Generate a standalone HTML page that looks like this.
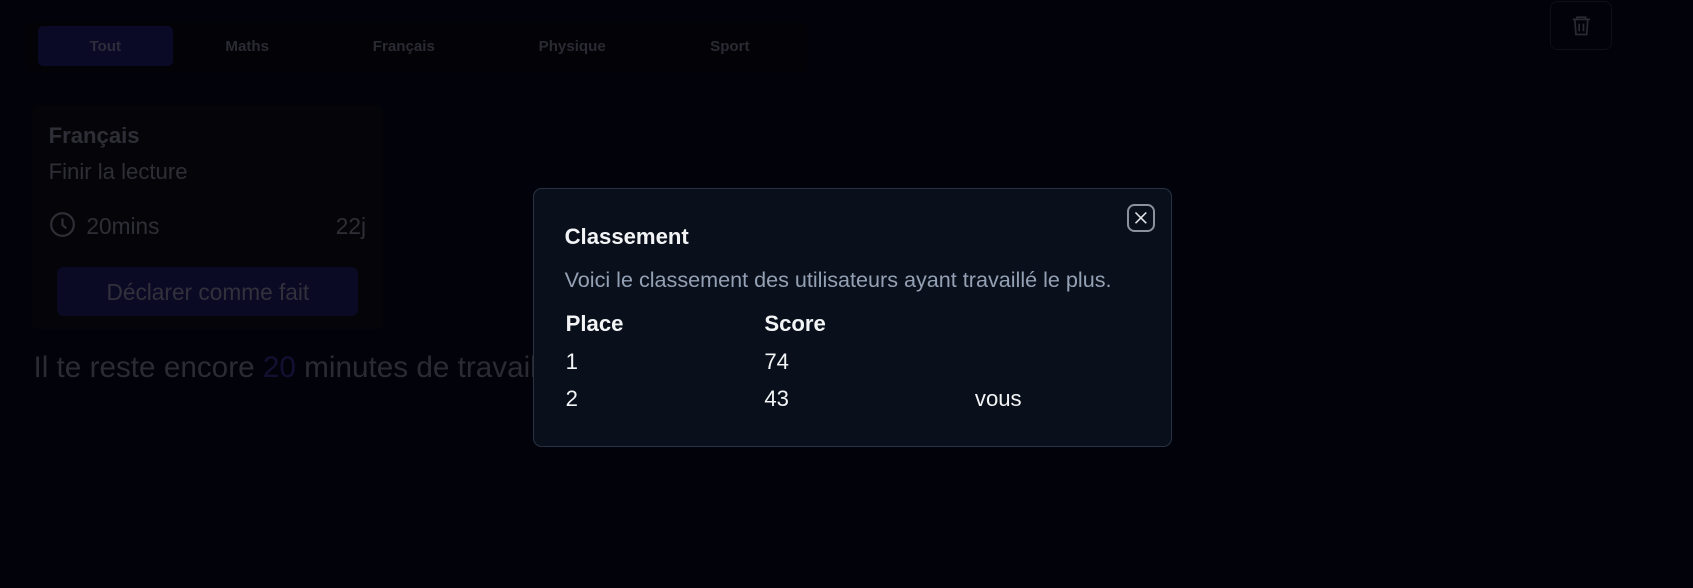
<!DOCTYPE html>
<html><head><meta charset="utf-8"><style>
html{zoom:1.0797}
body{margin:0;width:1568px;height:545px;background:#02030a;font-family:"Liberation Sans",sans-serif;position:relative;overflow:hidden;color:#2e2e36}
.abs{position:absolute}
.tabs{left:24px;top:20px;width:723px;height:48px;background:#030307;border-radius:6px}
.tab{position:absolute;top:4px;height:37px;line-height:39px;font-size:14px;font-weight:bold;text-align:center;color:#2a2a33}
.card{left:30px;top:97px;width:325px;height:208px;background:#050509;border-radius:6px}
.btn{left:53px;top:247px;width:279px;height:46px;background:#0b0a24;border-radius:6px;font-size:21px;line-height:48px;text-align:center;color:#31313c}
.modal{left:494px;top:174px;width:590px;height:238px;background:#0a101b;border:1px solid #283245;border-radius:8px}
.m{position:absolute;color:#f3f4f6;font-size:20.5px}
</style></head><body>
<div class="abs tabs">
<div class="tab" style="left:11px;width:125px;background:#0b0a26;border-radius:5px;color:#2c2c3a">Tout</div>
<div class="tab" style="left:155px;width:100px">Maths</div>
<div class="tab" style="left:300px;width:100px">Français</div>
<div class="tab" style="left:456px;width:100px">Physique</div>
<div class="tab" style="left:602px;width:100px">Sport</div>
</div>
<div class="abs" style="left:1436px;top:1px;width:57px;height:45px;border:1px solid #0f0f15;border-radius:7px;box-sizing:border-box">
<svg width="57" height="45" viewBox="0 0 57 45" style="position:absolute;left:-1px;top:-1px"><g fill="none" stroke="#2a2a32" stroke-width="1.6"><path d="M21 17h16M25 17v-2h8v2M23 17l1 14h10l1-14M27 21v7M31 21v7"/></g></svg>
</div>
<div class="abs card"></div>
<div class="abs" style="left:45px;top:114px;font-size:20.5px;font-weight:bold;color:#2e2e36">Français</div>
<div class="abs" style="left:45px;top:147px;font-size:20.5px;color:#2e2e36">Finir la lecture</div>
<svg class="abs" style="left:45px;top:195px" width="25" height="25" viewBox="0 0 25 25"><circle cx="12.5" cy="12.5" r="10.5" fill="none" stroke="#2e2e36" stroke-width="2"/><path d="M12.5 7v6l3.5 3" fill="none" stroke="#2e2e36" stroke-width="2"/></svg>
<div class="abs" style="left:80px;top:197px;font-size:21px;color:#2e2e36">20mins</div>
<div class="abs" style="left:311px;top:197px;font-size:21px;color:#2e2e36">22j</div>
<div class="abs btn">Déclarer comme fait</div>
<div class="abs" style="left:31px;top:325px;font-size:27.5px;color:#2b2b32;white-space:nowrap">Il te reste encore <span style="color:#121033">20</span> minutes de travail</div>
<div class="abs modal">
<div class="abs" style="left:549px;top:14px;width:26px;height:26px;border:2px solid #8c929c;border-radius:7px;box-sizing:border-box"><svg width="22" height="22" viewBox="0 0 22 22"><path d="M6 6l10 10M16 6L6 16" stroke="#e5e7eb" stroke-width="1.4"/></svg></div>
<div class="m" style="left:28px;top:33px;font-weight:bold;font-size:20.5px">Classement</div>
<div class="m" style="left:28px;top:72px;color:#94a0b4;font-size:20px">Voici le classement des utilisateurs ayant travaillé le plus.</div>
<div class="m" style="left:29px;top:113px;font-weight:bold">Place</div>
<div class="m" style="left:213px;top:113px;font-weight:bold">Score</div>
<div class="m" style="left:29px;top:148px">1</div>
<div class="m" style="left:213px;top:148px">74</div>
<div class="m" style="left:29px;top:183px">2</div>
<div class="m" style="left:213px;top:183px">43</div>
<div class="m" style="left:408px;top:183px">vous</div>
</div>
</body></html>
